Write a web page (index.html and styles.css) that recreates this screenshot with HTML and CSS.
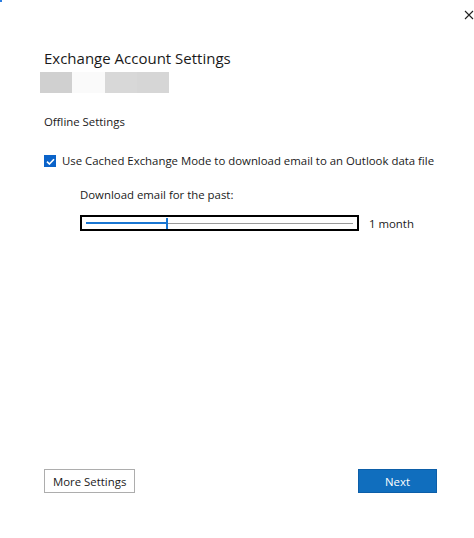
FILE: index.html
```html
<!DOCTYPE html>
<html lang="en">
<head>
    <meta charset="UTF-8">
    <meta name="viewport" content="width=device-width, initial-scale=1.0">
    <title>Exchange Account Settings</title>
    <link rel="stylesheet" href="styles.css">
</head>
<body>
    <div class="dialog">
        <span class="corner"></span>
        <div class="titlebar">
            <span class="close" aria-label="Close">
                <svg width="10" height="10" viewBox="0 0 10 10"><path d="M1 1 L9 9 M9 1 L1 9" stroke="#222" stroke-width="1.1" fill="none"/></svg>
            </span>
        </div>

        <main class="content">
            <h1>Exchange Account Settings</h1>
            <div class="account">
                <span class="px px1"></span>
                <span class="px px2"></span>
                <span class="px px3"></span>
                <span class="px px4"></span>
            </div>

            <h2>Offline Settings</h2>

            <label class="check">
                <span class="box">
                    <svg width="9" height="7" viewBox="0 0 9 7"><path d="M1 3.6 L3.4 6 L8 1.2" stroke="#fff" stroke-width="1.6" fill="none"/></svg>
                </span>
                Use Cached Exchange Mode to download email to an Outlook data file
            </label>

            <div class="sub">
                <p class="label">Download email for the past:</p>
                <div class="slider-row">
                    <div class="slider">
                        <div class="track">
                            <div class="fill" style="width: 81px"></div>
                            <span class="thumb" style="left: 80px"></span>
                        </div>
                    </div>
                    <span class="value">1 month</span>
                </div>
            </div>
        </main>

        <footer class="actions">
            <button type="button" class="btn">More Settings</button>
            <button type="button" class="btn primary">Next</button>
        </footer>
    </div>
</body>
</html>
```

FILE: styles.css
```css
html, body {
    margin: 0;
    padding: 0;
    background: #fff;
}
body {
    font-family: "Open Sans", "Noto Sans", sans-serif;
    font-size: 11.4px;
    color: #1a1a1a;
}
.dialog {
    position: relative;
    height: 538px;
    display: flex;
    flex-direction: column;
}
.corner {
    position: absolute;
    left: 0;
    top: 0;
    width: 2px;
    height: 2px;
    background: #2b7de0;
}
.titlebar {
    display: flex;
    justify-content: flex-end;
    padding: 9px 0 0;
}
.close {
    width: 10px;
    height: 12px;
    display: flex;
    align-items: center;
}
.content {
    padding: 0 30px 0 44px;
    flex: 1;
}
h1 {
    font-size: 15px;
    font-weight: 400;
    margin: 27px 0 0;
    line-height: 20px;
    color: #1a1a1a;
}
.account {
    display: flex;
    margin: 4px 0 0 -4px;
}
.px {
    width: 32px;
    height: 21px;
}
.px1 { background: #d0d0d0; }
.px2 { background: #fafafa; width: 33px; }
.px3 { background: #d8d8d8; }
.px4 { background: #d6d6d6; }
h2 {
    font-size: 11.4px;
    font-weight: 400;
    line-height: 16px;
    margin: 21px 0 0;
}
.check {
    display: flex;
    align-items: center;
    gap: 6px;
    margin-top: 23px;
    line-height: 16px;
    white-space: nowrap;
}
.box {
    width: 12px;
    height: 12px;
    flex: none;
    background: #0a63c9;
    display: flex;
    align-items: center;
    justify-content: center;
}
.sub {
    padding-left: 36px;
}
.label {
    margin: 18px 0 0;
    line-height: 16px;
}
.slider-row {
    display: flex;
    align-items: center;
    gap: 10px;
    margin-top: 12px;
}
.slider {
    height: 12px;
    border: 2px solid #000;
    display: flex;
    align-items: center;
    padding: 0 4px;
    box-sizing: content-box;
    width: 267px;
}
.track {
    position: relative;
    flex: 1;
    height: 1px;
    background: #9a9a9a;
}
.fill {
    height: 2px;
    margin-top: -1px;
    background: #1976d2;
}
.thumb {
    position: absolute;
    top: -5px;
    width: 2px;
    height: 11px;
    background: #1976d2;
}
.actions {
    display: flex;
    justify-content: space-between;
    padding: 0 37px 45px 44px;
}
.btn {
    font-family: inherit;
    font-size: 11.4px;
    height: 24px;
    padding: 0 8px;
    border: 1px solid #adadad;
    background: #fff;
    color: #1a1a1a;
}
.btn.primary {
    width: 79px;
    background: #106ebe;
    border-color: #0c5ea8;
    color: #fff;
}
```
